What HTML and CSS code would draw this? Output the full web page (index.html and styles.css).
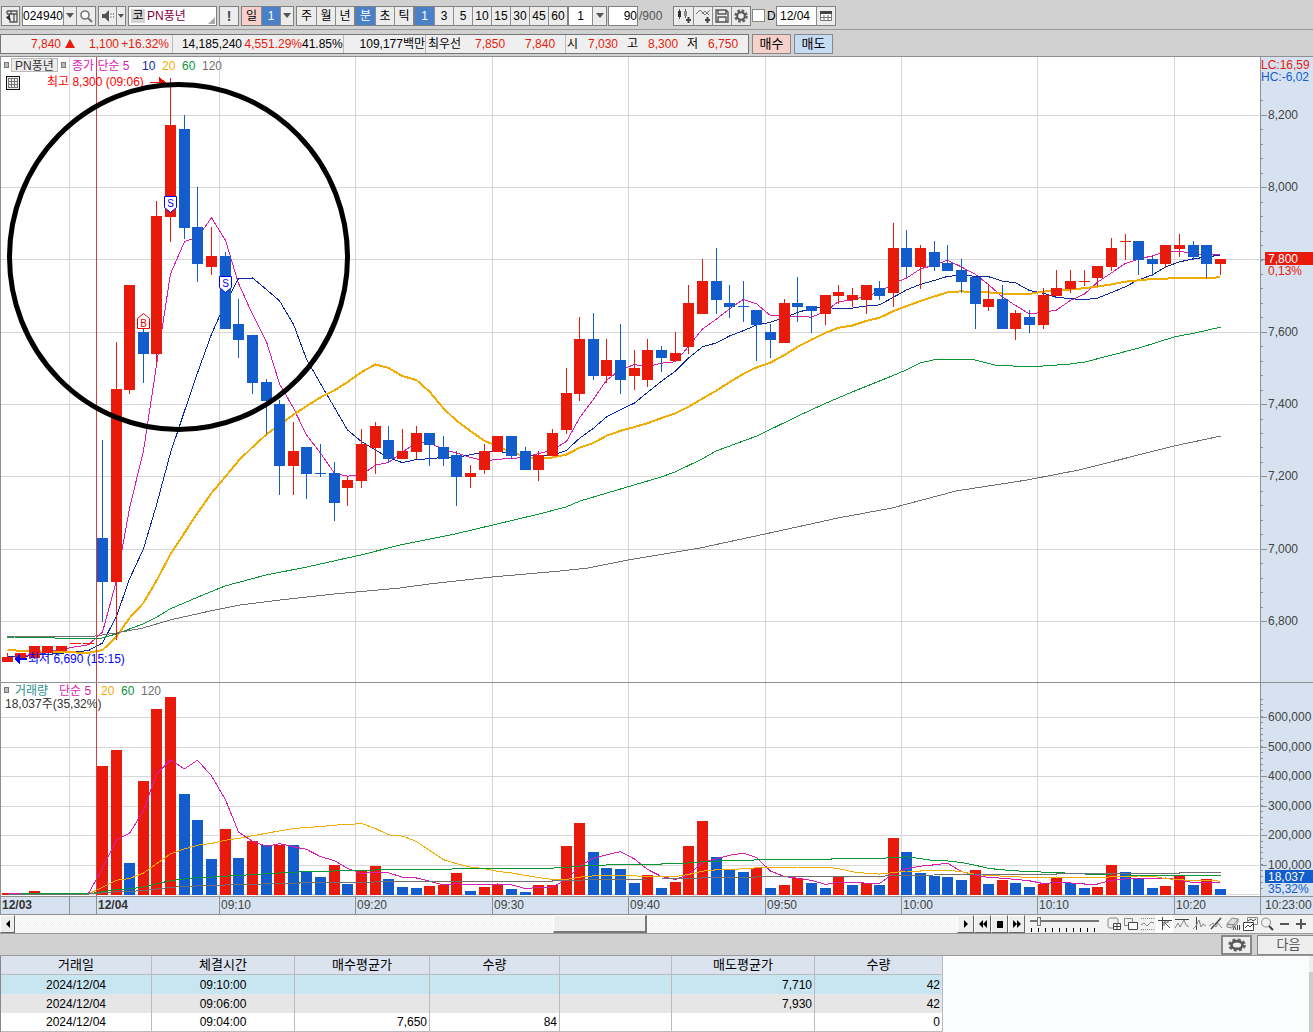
FILE: index.html
```html
<!DOCTYPE html>
<html lang="ko">
<head>
<meta charset="utf-8">
<title>PN풍년 차트</title>
<link rel="stylesheet" href="styles.css">
</head>
<body>
<header class="toolbar">
  <button class="group w-icon" aria-label="패널 이동"><svg width="14" height="14" viewBox="0 0 14 14"><path d="M3 2h10v11H6V9M3 2v3M7 2v3M10 5v8M3 5h10" fill="none" stroke="#555" stroke-width="1.3"/><path d="M6 5v7L2 8.500z" fill="#333"/></svg></button>
  <div class="group">
    <input class="code" aria-label="종목코드" value="024940">
    <button class="drop" aria-label="종목 목록"><i class="caret"></i></button>
    <button class="w-icon" aria-label="종목 검색"><svg width="14" height="14" viewBox="0 0 14 14"><circle cx="6" cy="6" r="4" fill="#fff" stroke="#777" stroke-width="1.6"/><path d="M9 9l4 4" stroke="#777" stroke-width="2.2"/></svg></button>
  </div>
  <div class="group">
    <button class="sound" aria-label="음성"><svg width="14" height="14" viewBox="0 0 14 14"><path d="M1 5h3l4-4v12L4 9H1z" fill="#555"/><path d="M9.500 5h1M12 5h1M9.500 8h1M12 8h1" stroke="#777" stroke-width="1.500"/></svg></button>
    <button class="drop slim" aria-label="음성 설정"><i class="caret"></i></button>
  </div>
  <div class="group name"><span class="chip">코</span><span class="stock">PN풍년</span><i class="corner"></i></div>
  <button class="group alert">!</button>
  <div class="group"><button class="pink">일</button><button class="on">1</button><button class="drop" aria-label="일봉 단위"><i class="caret"></i></button></div>
  <div class="group flush"><button>주</button><button>월</button><button>년</button></div>
  <div class="group flush"><button class="on">분</button><button>초</button><button>틱</button></div>
  <div class="group flush"><button class="on">1</button><button>3</button><button>5</button><button>10</button><button>15</button><button>30</button><button>45</button><button>60</button></div>
  <div class="group tight"><input class="unit" aria-label="분 단위" value="1"><button class="drop wide" aria-label="단위 목록"><i class="caret"></i></button></div>
  <div class="group tight"><input class="count" aria-label="봉 개수" value="90"></div>
  <span class="total">/900</span>
  <div class="group tools tight">
    <button aria-label="종목 추가"><svg width="16" height="16" viewBox="0 0 16 16"><path d="M3.500 1v10M9.500 1v9" stroke="#555"/><path d="M2 3h3v6H2z" fill="#333"/><path d="M8 3h3v5H8z" fill="#888"/><path d="M12.500 9v6M10 12h5" stroke="#444" stroke-width="2"/></svg></button>
    <button aria-label="지표 추가"><svg width="16" height="16" viewBox="0 0 16 16"><path d="M1 6l4-4 5 5 5-5M7 6l3-3 4 4" fill="none" stroke="#777"/><path d="M12.500 9v6M10 12h5" stroke="#444" stroke-width="2"/></svg></button>
    <button aria-label="저장"><svg width="16" height="16" viewBox="0 0 16 16"><path d="M2 2h10l2 2v10H2zM4 2v4h8V2M4 14V9h8v5" fill="#eee" stroke="#555" stroke-width="1.400"/></svg></button>
    <button aria-label="설정"><svg width="16" height="16" viewBox="0 0 16 16"><circle cx="8" cy="8" r="5.500" fill="none" stroke="#666" stroke-width="2.500" stroke-dasharray="2.600 1.720"/><circle cx="8" cy="8" r="3.800" fill="#eee" stroke="#555" stroke-width="2"/></svg></button>
  </div>
  <label class="day"><input type="checkbox">D</label>
  <div class="group"><input class="date" aria-label="날짜" value="12/04"><button class="w-icon" aria-label="달력"><svg width="14" height="14" viewBox="0 0 14 14"><path d="M1.500 3.500h11v8h-11zM5 6v6M9 6v6M1 8.500h12" fill="#fff" stroke="#777"/><path d="M1 2h12v3H1z" fill="#444"/></svg></button></div>
</header>

<section class="quotes">
  <div class="quote-box">
    <div class="cell up c1"><b class="w60">7,840</b><i class="tri"></i><b class="w44">1,100</b><b class="w50">+16.32%</b></div>
    <div class="cell c2"><b class="w70">14,185,240</b><b class="w60 up">4,551.29%</b><b class="w40">41.85%</b></div>
    <div class="cell c3"><b>109,177백만</b></div>
    <div class="cell c4"><span>최우선</span><b class="w44 up">7,850</b><b class="w50 up">7,840</b></div>
    <div class="cell c5"><span>시</span><b class="w40 up">7,030</b><span class="next">고</span><b class="w40 up">8,300</b><span class="next">저</span><b class="w40 up">6,750</b></div>
  </div>
  <button class="trade buy">매수</button>
  <button class="trade sell">매도</button>
</section>

<main>
  <svg class="chart" id="chart" viewBox="0 56 1313 859" role="img" aria-label="PN풍년 분봉 차트"></svg>
</main>

<nav class="scroller">
  <button class="sb" aria-label="왼쪽"><svg width="8" height="8" viewBox="0 0 8 8"><path d="M6 0v8L2 4z"/></svg></button>
  <div class="track"><span class="thumb"></span></div>
  <button class="sb" aria-label="재생"><svg width="10" height="8" viewBox="0 0 10 8"><path d="M3 0l4 4-4 4z"/></svg></button>
  <button class="sb" aria-label="되감기"><svg width="10" height="8" viewBox="0 0 10 8"><path d="M5 0v8L1 4zM9 0v8L5 4z"/></svg></button>
  <button class="sb" aria-label="정지"><svg width="10" height="8" viewBox="0 0 10 8"><path d="M2 1h6v7H2z"/></svg></button>
  <button class="sb" aria-label="빨리 감기"><svg width="10" height="8" viewBox="0 0 10 8"><path d="M1 0v8l4-4zM5 0v8l4-4z"/></svg></button>
  <div class="speed"><input type="range" min="0" max="10" value="1" aria-label="속도"><i class="marks"></i></div>
  <div class="draw">
    <button aria-label="창 추가"><svg viewBox="0 0 16 16"><rect x="2" y="2" width="10" height="10" rx="2"/><path d="M7.500 7.500h7v6h-7zM11 8v6M8 10.500h6" fill="#fff" stroke="#444"/></svg></button>
    <button aria-label="창 복사"><svg viewBox="0 0 16 16"><path d="M1.500 2.500h8v7h-8z"/><path d="M5.500 6.500h9v7h-9z" fill="#fff" stroke="#444"/></svg></button>
    <button aria-label="구간"><svg viewBox="0 0 16 16"><path d="M1 2.500h13M1 13.500h13" stroke-dasharray="1 1"/><path d="M1 9l3-2 3 3 4-4 3 1"/></svg></button>
    <button class="active" aria-label="십자선"><svg viewBox="0 0 16 16"><path d="M1 4.500h14M5.500 1v13" stroke="#444"/><path d="M7 6l6 6M7 10V6h5" stroke="#555"/></svg></button>
    <button aria-label="수평선"><svg viewBox="0 0 16 16"><path d="M1 3.500h14" stroke="#444"/><path d="M1 12l3-5 2 4 4-7 2 5 3 2"/></svg></button>
    <button aria-label="수직선"><svg viewBox="0 0 16 16"><path d="M5.500 1v13" stroke="#444"/><path d="M2 13l3-3 3-6 2 7 2-3 3 2"/></svg></button>
    <button aria-label="추세선"><svg viewBox="0 0 16 16"><path d="M3 13L13 2" stroke="#444" stroke-width="1.500"/><path d="M1 10l4-3 3 4 2-4 4 5"/></svg></button>
    <button aria-label="모두 지우기"><svg viewBox="0 0 16 16"><path d="M2 8l5-6 6 1-4 6zM2 8v3l5 1 2-3-7-1M13 3v3l-3 4" fill="#ddd"/><path d="M8 14l1.500-4 1.500 4M12.500 9v5M14.500 9v5" stroke="#444"/></svg></button>
    <button aria-label="차트 겹치기"><svg viewBox="0 0 16 16"><path d="M5.500 1.500h10v7h-10z"/><path d="M1.500 6.500h10v8h-10z" fill="#fff" stroke="#444"/><path d="M3 12l3-3 2 2 3-3M6 5l3-2 2 2 3-2" stroke="#444"/></svg></button>
    <button aria-label="돋보기"><svg viewBox="0 0 16 16"><circle cx="7" cy="6.500" r="4.500"/><path d="M10 10l4 4" stroke="#444" stroke-width="2"/></svg></button>
    <button aria-label="축소"><svg viewBox="0 0 16 16"><path d="M4 8h9" stroke="#555" stroke-width="2"/></svg></button>
    <button aria-label="확대"><svg viewBox="0 0 16 16"><path d="M3 8h10M8 3v10" stroke="#555" stroke-width="2"/></svg></button>
  </div>
</nav>

<div class="actions">
  <button class="gear" aria-label="내역 설정"><svg width="20" height="14" viewBox="0 0 20 14"><ellipse cx="10" cy="7" rx="7.500" ry="5" fill="none" stroke="#666" stroke-width="3" stroke-dasharray="3 2"/><ellipse cx="10" cy="7" rx="5.500" ry="3.800" fill="#eee" stroke="#555" stroke-width="2.500"/></svg></button>
  <button class="more">다음</button>
</div>

<section class="history">
  <table>
    <colgroup><col class="k1"><col class="k2"><col class="k3"><col class="k4"><col class="k5"><col class="k6"><col class="k7"></colgroup>
    <thead><tr><th>거래일</th><th>체결시간</th><th>매수평균가</th><th>수량</th><th></th><th>매도평균가</th><th>수량</th></tr></thead>
    <tbody>
      <tr class="sel"><td>2024/12/04</td><td>09:10:00</td><td></td><td></td><td></td><td>7,710</td><td>42</td></tr>
      <tr class="alt"><td>2024/12/04</td><td>09:06:00</td><td></td><td></td><td></td><td>7,930</td><td>42</td></tr>
      <tr><td>2024/12/04</td><td>09:04:00</td><td>7,650</td><td>84</td><td></td><td></td><td>0</td></tr>
    </tbody>
  </table>
  <span class="vbar"></span>
</section>
<script src="chart.js"></script>
</body>
</html>
```
FILE: styles.css
```css
* { box-sizing: border-box; }
body {
  margin: 0;
  min-height: 100vh;
  display: flex;
  flex-direction: column;
  background: #d1d1d1;
  color: #000;
  font: 12px/14px "Liberation Sans", "Noto Sans CJK KR", sans-serif;
}
button, input { font: inherit; color: inherit; margin: 0; padding: 0; border: 0; border-radius: 0; min-width: 0; }
button { display: flex; align-items: center; justify-content: center; background: #eee; white-space: nowrap; }
svg { display: block; flex: none; }
b { font-weight: 400; text-align: right; }

.toolbar { display: flex; align-items: center; height: 30px; padding: 2px 0 0 1px; border-bottom: 1px solid #999; white-space: nowrap; }
.group { display: flex; height: 20px; margin-right: 2px; border: 1px solid #808080; background: #ececec; flex: none; }
.group > button { width: 19px; height: 18px; background: #ececec; }
.group > * + button { border-left: 1px solid #8c8c8c; }
.group.tight { margin-right: 1px; }
.group.flush { margin-right: 0; }
.group > button.on { background: #4a80c8; color: #fff; }
.group > button.pink { background: #f6d0ca; }
.group > .drop { width: 13px; }
.group > .drop.slim { width: 9px; }
.group > .drop.wide { width: 14px; }
.group > .sound { width: 17px; }
.w-icon { width: 19px; }
.group input { background: #fff; height: 18px; }
.code { width: 40px; text-align: center; }
.unit { width: 23px; text-align: center; }
.count { width: 28px; text-align: right; }
.date { width: 39px; padding-left: 3px; }
.caret { border: 4px solid transparent; border-top: 5px solid #555; border-bottom: 0; }
.slim .caret { border-width: 4px 3px 0; }
.name { position: relative; width: 89px; background: #fff; padding: 2px; gap: 2px; }
.chip { width: 14px; background: #d4d4d4; text-align: center; }
.stock { color: #800040; }
.corner { position: absolute; right: 1px; bottom: 1px; border-left: 7px solid transparent; border-bottom: 7px solid #aaa; }
.alert { width: 20px; font-weight: 700; font-size: 14px; color: #444; }
.total { width: 34px; color: #555; }
.day { display: flex; align-items: center; gap: 2px; width: 24px; }
.day input { appearance: none; width: 13px; height: 13px; background: #fff; border: 1px solid #888; }

.quotes { display: flex; align-items: center; height: 26px; padding-top: 1px; white-space: nowrap; gap: 3px; }
.quote-box { display: flex; height: 20px; border: 1px solid #777; background: #efefef; }
.cell { display: flex; align-items: center; border-right: 1px solid #bbb; }
.cell:last-child { border-right: 0; }
.up { color: #e81a0c; }
.c1 { width: 172px; }
.c2 { width: 171px; }
.c3 { width: 82px; justify-content: flex-end; }
.c4 { width: 140px; padding-left: 2px; }
.c5 { width: 182px; padding-left: 1px; }
.w40 { width: 40px; }
.w44 { width: 44px; }
.w50 { width: 50px; }
.w60 { width: 60px; }
.w70 { width: 69px; }
.next { margin-left: 9px; }
.tri { margin-left: 4px; border: 5px solid transparent; border-top: 0; border-bottom: 9px solid #e81a0c; }
.trade { width: 39px; height: 20px; border: 1px solid #888; font-size: 13px; }
.buy { background: #f6d0ca; }
.sell { background: #c6dcf2; }

.chart { width: 100%; height: auto; background: #fff; }
.chart text { font: 12px "Liberation Sans", "Noto Sans CJK KR", sans-serif; }
.chart .bold { font-weight: 700; }

.scroller { display: flex; height: 18px; background: #f2f2f2; }
.sb { width: 17px; flex: none; border: 1px solid #fff; border-right-color: #666; border-bottom-color: #666; }
.sb:first-child { width: 15px; }
.track { flex: 1; display: grid; grid-template-columns: 538fr 94px 310fr; background: repeating-conic-gradient(#f0f0f0 0 25%, #fff 0 50%) 0 0 / 2px 2px; }
.thumb { grid-column: 2; background: #efefef; border: 1px solid #fff; border-right: 2px solid #777; border-bottom: 2px solid #777; }
.speed { width: 80px; padding: 2px 6px 0 5px; flex: none; }
.speed input { display: block; appearance: none; width: 100%; height: 9px; background: linear-gradient(#777, #777) 0 3px / 100% 2px no-repeat; }
.speed input::-webkit-slider-thumb { appearance: none; width: 4px; height: 9px; background: #eee; border: 1px solid #777; }
.marks { display: block; height: 4px; margin-top: 2px; background: repeating-linear-gradient(90deg, transparent 0 1px, #000 1px 2px, transparent 2px 7px); }
.draw { display: flex; width: 208px; flex: none; }
.draw button { width: 17px; background: none; }
.draw .active { background: #fff; }
.draw svg { width: 16px; height: 16px; fill: none; stroke: #888; }

.actions { display: flex; justify-content: flex-end; align-items: center; height: 23px; gap: 5px; border: solid #999; border-width: 1px 0; }
.gear { width: 31px; height: 20px; border: 2px solid #888; }
.more { width: 56px; height: 20px; padding-left: 6px; border: solid #888; border-width: 1px 0 1px 1px; color: #555; font-size: 13px; }

.history { flex: 1; display: flex; justify-content: space-between; align-items: flex-start; background: #fbfcfe; border-left: 1px solid #888; }
table { width: 942px; table-layout: fixed; border-collapse: separate; border-spacing: 0; background: #fff; }
th, td { height: 19px; padding: 0 2px; border-right: 1px solid #bbb; text-align: right; font-weight: 400; }
th { background: #dbe3ee; border-bottom: 1px solid #bbb; text-align: center; font-size: 13px; }
td:nth-child(-n+2) { text-align: center; }
.sel { background: #c8e6f2; }
.alt { background: #e6e6e6; }
tbody tr:last-child td { border-bottom: 1px solid #bbb; }
.k1 { width: 151px; }
.k2 { width: 143px; }
.k3 { width: 135px; }
.k4 { width: 130px; }
.k5 { width: 112px; }
.k6 { width: 143px; }
.k7 { width: 128px; }
.vbar { align-self: stretch; width: 4px; background: linear-gradient(#eee 16px, #ccc 0); }
```
FILE: chart.js
```js
const RED = '#e81a0c', BLUE = '#125ccb', MAGENTA = '#d81bb1', NAVY = '#0c28a0', GOLD = '#f0ac00', GREEN = '#0a9637', GRAY = '#707070';

// One bar per minute: colour, high, body top, body bottom, low, volume top, volume colour where it differs
const bars = [
['r',653,657,662,662,893],['r',653,653,658,658,894],['r',646,646,658,658,891],['r',646,646,653,653,894],['r',646,646,651,651,894],['r',643,643,643,643,894],['r',643,643,643,643,894],
['b',440,538,582,622,766,'r'],['r',342,389,582,640,750],['r',285,285,390,394,863,'b'],['b',328,332,354,383,781,'r'],['r',201,216,354,365,709],['r',78,125,217,242,697],
['b',115,129,228,239,794],['b',187,227,264,282,820],['r',227,256,267,275,859,'b'],['b',252,256,329,329,829,'r'],['b',299,324,340,358,858],['b',335,335,383,394,841,'r'],
['b',379,382,401,434,845],['b',400,404,466,495,845,'r'],['r',422,451,466,495,845,'b'],['b',447,447,474,499,871],['b',444,473,473,477,877],['b',462,473,503,521,865,'r'],
['r',476,480,488,506,884,'b'],['r',429,444,481,488,870],['r',422,426,448,474,866],['b',426,440,459,463,879],['r',429,451,459,459,887,'b'],['r',426,433,452,459,888,'b'],
['b',433,433,445,466,886,'r'],['b',436,447,459,466,885,'r'],['b',451,455,477,506,873,'r'],['r',465,473,477,488,891,'b'],['r',444,451,470,474,887],['r',436,436,452,452,884],
['b',436,436,456,459,889],['b',447,451,470,470,892],['r',451,455,470,481,885],['r',429,433,456,456,885],['r',368,393,430,434,846],['r',317,339,394,401,823],
['b',313,339,376,380,852],['r',339,360,376,383,868,'b'],['b',324,360,380,394,869],['r',350,368,376,390,883,'b'],['r',339,350,380,387,875],['b',346,350,358,372,888],
['r',332,353,361,361,882],['r',285,303,347,354,846],['r',259,281,314,314,821],['b',248,281,300,314,857],['b',285,303,307,318,870],['b',281,306,306,322,872],
['b',310,310,325,361,868,'r'],['b',324,332,340,358,888],['r',299,303,343,343,885],['b',277,303,307,322,878,'r'],['b',306,306,311,333,883],['r',295,295,314,325,888,'b'],
['r',285,292,296,304,877],['r',288,295,300,307,885,'b'],['r',285,285,300,314,883],['b',281,288,296,300,885],['r',223,248,293,307,838],['b',230,248,267,278,852],
['r',245,248,267,289,873,'b'],['b',241,252,267,271,876],['b',245,263,271,271,877],['b',259,270,282,293,880],['b',277,277,304,329,870,'r'],['r',284,299,307,311,884,'b'],
['b',285,299,329,329,880,'r'],['r',310,313,329,340,883,'b'],['b',310,317,325,333,887],['r',288,295,325,329,884],['r',270,288,296,296,878],['r',270,281,289,293,883,'b'],
['r',270,281,281,286,888,'b'],['r',266,266,278,286,887],['r',238,248,267,271,865],['r',234,241,241,260,872,'b'],['b',241,241,260,275,879],['b',256,259,264,276,888],
['r',245,245,264,268,886],['r',234,245,249,257,875],['b',241,245,257,260,885],['b',245,245,264,278,879,'r'],['r',259,259,264,275,889,'b']
];

const STEP = 13.635;
const cx = i => Math.floor(7 + STEP * i);
const out = [];
const rect = (x, y, w, h, fill) => out.push(`<rect x="${x}" y="${y}" width="${w}" height="${h}" fill="${fill}"/>`);
const text = (x, y, s, fill, cls = '') => out.push(`<text x="${x}" y="${y}" fill="${fill}" class="${cls}">${s}</text>`);
const line = (points, color, width = 1) => out.push(`<polyline points="${points}" fill="none" stroke="${color}" stroke-width="${width}"/>`);

// Simple moving average; "before" holds the values that precede the first visible bar
function average(values, n, before, color, width) {
  const all = before.concat(values), shift = before.length, pts = [];
  for (let i = 0; i < values.length; i++) {
    let sum = 0;
    for (let k = 0; k < n; k++) sum += all[shift + i - k];
    pts.push(`${cx(i) + 0.5},${(sum / n).toFixed(1)}`);
  }
  line(pts.join(' '), color, width);
}

out.push('<g shape-rendering="crispEdges">');
// Grid
const prices = [[115, '8,200'], [187, '8,000'], [259, '7,800'], [332, '7,600'], [404, '7,400'], [476, '7,200'], [549, '7,000'], [621, '6,800']];
const volumes = [[717, '600,000'], [747, '500,000'], [776, '400,000'], [806, '300,000'], [835, '200,000'], [865, '100,000']];
const times = [[69, ''], [219, '09:10'], [355, '09:20'], [492, '09:30'], [628, '09:40'], [765, '09:50'], [901, '10:00'], [1037, '10:10'], [1174, '10:20']];
prices.concat(volumes, [[894, '']]).forEach(([y]) => rect(0, y, 1259, 1, '#d6d6d6'));
times.forEach(([x]) => rect(x, 57, 1, 839, '#d6d6d6'));

// Price averages
const closes = bars.map(b => b[0] === 'r' ? b[2] : b[3]);
const earlier = Array(7).fill(637).concat(Array(12).fill(657));
average(closes, 5, earlier, MAGENTA, 1);
average(closes, 10, earlier, NAVY, 1);
average(closes, 20, earlier, GOLD, 2);
line('7,637 14,637 55,638 102,638 116,634 143,624 157,617 170,609 198,597 225,586 266,575 307,567 347,558 361,555 400,545 455,534 514,520 539,514 566,507 580,501 607,493 634,485 661,477 675,472 702,459 716,451 757,436 798,416 824,404 852,392 892,376 906,370 920,363 933,360 965,359 975,360 995,365 1030,367 1070,364 1085,362 1112,355 1139,348 1174,337 1195,333 1221,327', GREEN);
line('7,636 95,636 116,633 143,628 170,620 210,611 240,605 280,600 334,594 400,588 429,584 492,577 560,571 588,568 628,560 700,548 765,534 838,518 892,508 956,491 1027,480 1079,470 1174,446 1221,436', GRAY);

// Candles and volume bars
bars.forEach(([c, hi, top, bot, lo, vol, vc], i) => {
  const color = c === 'r' ? RED : BLUE, x = cx(i);
  rect(x, hi, 1, Math.max(1, lo - hi), color);
  rect(x - 5, top, 11, Math.max(1, bot - top), color);
  if (vol < 894) rect(x - 5, vol, 11, 895 - vol, (vc || c) === 'r' ? RED : BLUE);
});
const vols = bars.map(b => b[5]), quiet = Array(120).fill(894);
average(vols, 5, quiet, MAGENTA, 1);
average(vols, 20, quiet, GOLD, 1);
average(vols, 60, quiet, GREEN, 1);
average(vols, 120, quiet, GRAY, 1);
rect(96, 57, 1, 839, '#d84040');

// Frame, value axis and time axis
rect(0, 56, 1313, 1, '#909090');
rect(1261, 57, 52, 857, '#d6e2f0');
rect(0, 897, 1313, 17, '#d6e2f0');
rect(1260, 57, 1, 857, '#909090');
rect(0, 57, 1, 857, '#909090');
rect(0, 682, 1313, 1, '#909090');
rect(0, 896, 1313, 1, '#909090');
rect(0, 914, 1313, 1, '#909090');
for (let y = 621; y > 90; y -= 14.46) rect(1261, Math.round(y), 2, 1, '#909090');
for (let y = 888; y > 696; y -= 5.92) rect(1261, Math.round(y), 2, 1, '#909090');
prices.concat(volumes).forEach(([y]) => rect(1261, y, 6, 1, '#909090'));
times.concat([[96, '']]).forEach(([x]) => rect(x, 897, 1, 17, '#909090'));
rect(1265, 252, 48, 13, RED);
rect(1265, 870, 48, 13, BLUE);

// Legend boxes
rect(11, 58, 47, 14, '#bbb');
rect(12, 59, 45, 12, '#ececec');
[[4, 62], [61, 62], [4, 687]].forEach(([x, y]) => { rect(x, y, 5, 6, '#777'); rect(x + 1, y + 1, 3, 4, '#bbb'); });
rect(6, 76, 14, 14, '#111');
rect(7, 77, 12, 12, '#eee');
out.push('<path d="M8.500 78.500h9v9h-9zM11.500 78v10M14.500 78v10M8 81.500h10M8 84.500h10" fill="none" stroke="#777"/>');
out.push('<path d="M150 82h12v1h-12zM159 77l7 5v1h-7z" fill="#f00"/><path d="M14 659l6-5v10zM19 658h8v2h-8z" fill="#00f"/>');
out.push('</g>');

text(15, 70, 'PN풍년', '#333');
text(72, 70, '종가 단순 5', MAGENTA); text(142, 70, '10', NAVY); text(162, 70, '20', GOLD); text(182, 70, '60', GREEN); text(202, 70, '120', GRAY);
text(47, 86, '최고 8,300 (09:06)', '#f00');
text(28, 663, '최저 6,690 (15:15)', '#00f');
text(15, 695, '거래량', '#2a9090'); text(59, 695, '단순 5', MAGENTA); text(101, 695, '20', GOLD); text(121, 695, '60', GREEN); text(141, 695, '120', GRAY);
text(5, 708, '18,037주(35,32%)', '#333');
prices.filter(p => p[0] !== 259).concat(volumes).forEach(([y, s]) => text(1268, y + 4, s, '#444'));
text(1261, 69, 'LC:16,59', RED); text(1261, 81, 'HC:-6,02', BLUE);
text(1268, 263, '7,800', '#fff'); text(1268, 275, '0,13%', RED);
text(1268, 881, '18,037', '#fff'); text(1268, 893, '35,32%', BLUE);
times.forEach(([x, s]) => text(x + 2, 909, s, '#444'));
text(2, 909, '12/03', '#333', 'bold'); text(98, 909, '12/04', '#333', 'bold'); text(1265, 909, '10:23:00', '#444');

// Trade markers and the highlighted area
const marker = (x, y, s, color, path) => out.push(`<path d="${path}" fill="#fff" stroke="${color}"/><text x="${x}" y="${y}" fill="${color}" text-anchor="middle" style="font-size:10px">${s}</text>`);
marker(170.5, 207, 'S', '#00f', 'M164.500 196.500h12v11l-6 5-6-5z');
marker(225.5, 287, 'S', '#00f', 'M219.500 276.500h12v11l-6 5-6-5z');
marker(143.5, 327, 'B', '#e00', 'M137.500 328.500h12v-10l-6-5-6 5z');
out.push('<ellipse cx="178.500" cy="257" rx="169" ry="172.500" fill="none" stroke="#000" stroke-width="5"/>');
document.getElementById('chart').innerHTML = out.join('');
```
